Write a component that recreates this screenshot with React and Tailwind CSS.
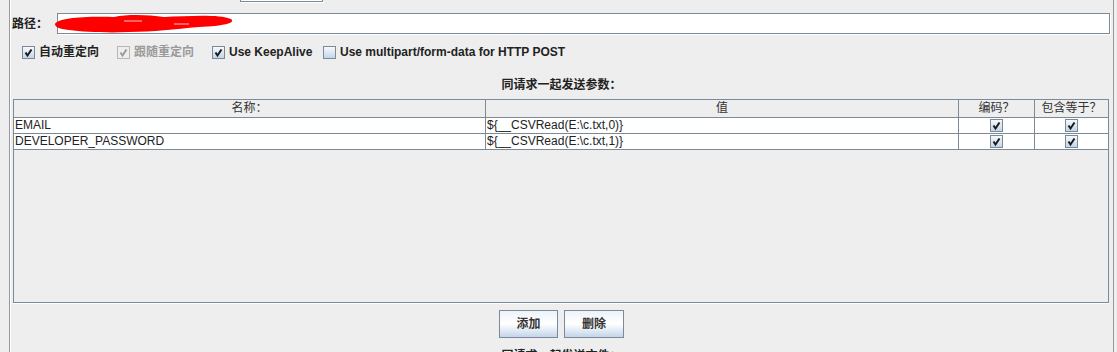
import React from "react";

const font = "font-['Liberation_Sans','Noto_Sans_CJK_SC',sans-serif]";

const Check = ({ checked, disabled }) => (
  <span
    className={`inline-flex w-[13px] h-[13px] shrink-0 border items-center justify-center ${
      disabled
        ? "border-[#b8b8b8] bg-[#eeeeee]"
        : "border-[#7a8a99] bg-linear-to-b from-[#f6f9fc] to-[#c4d5e8]"
    }`}
  >
    {checked && (
      <svg width="11" height="11" viewBox="0 0 11 11">
        <polyline
          points="2.5,5.5 4.5,8.5 8.5,2.5"
          fill="none"
          stroke={disabled ? "#9a9a9a" : "#1a1a1a"}
          strokeWidth="2"
        />
      </svg>
    )}
  </span>
);

const CheckItem = ({ width, checked, disabled, children }) => (
  <div className={`flex items-center gap-[4px] ${width}`}>
    <Check checked={checked} disabled={disabled} />
    <span
      className={`text-[12px] font-bold whitespace-nowrap ${
        disabled ? "text-[#9a9a9a]" : "text-[#222]"
      }`}
    >
      {children}
    </span>
  </div>
);

const rows = [
  { name: "EMAIL", value: "${__CSVRead(E:\\c.txt,0)}" },
  { name: "DEVELOPER_PASSWORD", value: "${__CSVRead(E:\\c.txt,1)}" },
];

const Table = () => (
  <div className="ml-[3px] w-[1096px] h-[204px] border border-[#7a8a99] shadow-[0_1px_0_#fff]">
    <div className="flex h-[18px] border-b border-[#7a8a99] text-[12px] text-[#333] leading-[17px]">
      <div className="w-[472px] border-r border-[#7a8a99] text-center">名称：</div>
      <div className="w-[473px] border-r border-[#7a8a99] text-center">值</div>
      <div className="w-[76px] border-r border-[#7a8a99] text-center">编码？</div>
      <div className="flex-1 text-center">包含等于？</div>
    </div>
    {rows.map((r) => (
      <div
        key={r.name}
        className="flex h-[16px] border-b border-[#7a8a99] bg-white text-[12px] text-[#222] leading-[15px]"
      >
        <div className="w-[472px] border-r border-[#7a8a99] pl-[1px]">{r.name}</div>
        <div className="w-[473px] border-r border-[#7a8a99] pl-[1px]">{r.value}</div>
        <div className="w-[76px] border-r border-[#7a8a99] flex items-center justify-center">
          <Check checked />
        </div>
        <div className="flex-1 flex items-center justify-center">
          <Check checked />
        </div>
      </div>
    ))}
  </div>
);

const Button = ({ width, children }) => (
  <button
    className={`${width} h-[28px] border border-[#7a8a99] bg-linear-to-b from-[#eef3f9] via-white to-[#c3d5ea] text-[12px] font-bold text-[#333]`}
  >
    {children}
  </button>
);

export default function App() {
  return (
    <div className={`w-[1117px] h-[352px] bg-[#eeeeee] overflow-hidden ${font}`}>
      <div className="ml-[9px] w-[1105px] h-[352px] border-x border-[#999] shadow-[inset_1px_0_0_#fff]">
        <div className="h-[13px]">
          <div className="ml-[230px] w-[83px] h-[2px] bg-white border-x border-b border-[#7a8a99] shadow-[1px_1px_0_#fff]" />
        </div>

        <div className="relative flex items-center h-[21px]">
          <span className="w-[47px] pl-[2px] text-[12px] font-bold text-[#222]">路径：</span>
          <div className="w-[1053px] h-[21px] bg-white border border-[#7a8a99] shadow-[1px_1px_0_#fff]" />
          <svg
            className="absolute left-[44px] top-0"
            width="185"
            height="21"
            viewBox="0 0 185 21"
          >
            <path
              d="M1,11 C4,5 30,3 60,4 C75,1 95,2 110,4 C135,3 165,1 177,6 C182,10 170,13 145,14 C120,16 100,19 75,19 C55,20 30,19 15,17 C5,16 1,14 1,11 Z"
              fill="#ff0000"
            />
            <path
              d="M70,8 L88,8 M120,11 L135,11"
              stroke="#ffc8c8"
              strokeWidth="1"
              fill="none"
            />
          </svg>
        </div>

        <div className="mt-[9px] h-[18px] flex items-center pl-[12px]">
          <CheckItem width="w-[95px]" checked>
            自动重定向
          </CheckItem>
          <CheckItem width="w-[95px]" checked disabled>
            跟随重定向
          </CheckItem>
          <CheckItem width="w-[111px]" checked>
            Use KeepAlive
          </CheckItem>
          <CheckItem width="w-auto">Use multipart/form-data for HTTP POST</CheckItem>
        </div>

        <div className="mt-[16px] h-[16px] leading-[16px] text-center text-[12px] font-bold text-[#222]">
          同请求一起发送参数：
        </div>

        <div className="mt-[6px]">
          <Table />
        </div>

        <div className="mt-[7px] flex justify-center gap-[6px]">
          <Button width="w-[59px]">添加</Button>
          <Button width="w-[60px]">删除</Button>
        </div>

        <div className="mt-[10px] text-center text-[12px] font-bold text-[#222] leading-[16px]">
          同请求一起发送文件：
        </div>
      </div>
    </div>
  );
}
